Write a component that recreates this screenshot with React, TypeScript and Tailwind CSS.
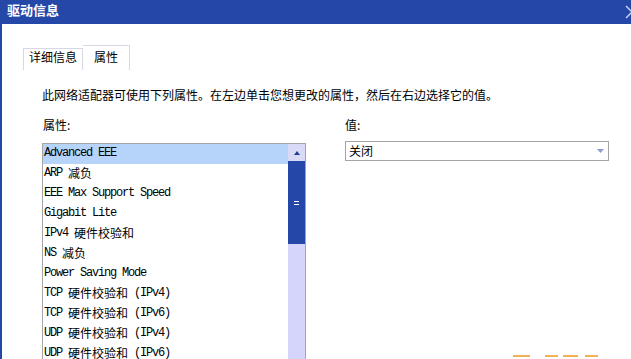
import React from 'react';

const props = [
  'Advanced EEE',
  'ARP 减负',
  'EEE Max Support Speed',
  'Gigabit Lite',
  'IPv4 硬件校验和',
  'NS 减负',
  'Power Saving Mode',
  'TCP 硬件校验和 (IPv4)',
  'TCP 硬件校验和 (IPv6)',
  'UDP 硬件校验和 (IPv4)',
  'UDP 硬件校验和 (IPv6)',
];

const cjk = /([\u3000-\u9fff\uff00-\uffef]+)/;

function MixedText({ text }: { text: string }) {
  // Latin glyphs squeezed to 6px cells, CJK kept at full 12px
  return (
    <>
      {text.split(cjk).map((part, i) =>
        cjk.test(part) ? (
          <span key={i} className="tracking-normal font-[family-name:'Noto_Sans_CJK_SC',sans-serif]">
            {part}
          </span>
        ) : (
          <span key={i} className="tracking-[-1.2px] whitespace-pre">
            {part}
          </span>
        )
      )}
    </>
  );
}

export default function App() {
  return (
    <div className="w-[631px] h-[359px] overflow-hidden bg-white flex flex-col font-[family-name:'Noto_Sans_CJK_SC',sans-serif] text-[12px] text-black">
      {/* Title bar */}
      <div className="h-[24px] shrink-0 bg-[#2548a8] flex items-center pl-[7px] pb-[4px]">
        <span className="text-white font-bold text-[13px] leading-[16px]">驱动信息</span>
        <svg className="ml-auto -mr-[9px] mt-[4px]" width="16" height="16" viewBox="0 0 16 16">
          <path d="M2 2 L8 8 L2 14" stroke="#c9d2f2" strokeWidth="1.5" fill="none" />
          <path d="M14 2 L8 8 L14 14" stroke="#c9d2f2" strokeWidth="1.5" fill="none" />
        </svg>
      </div>

      {/* Body */}
      <div className="flex-1 border-l-2 border-[#2548a8] flex flex-col">
        {/* Tabs */}
        <div className="pl-[21px] mt-[21px] flex items-end">
          <div className="h-[22px] px-[5px] border border-b-0 border-[#d6d8e6] leading-[16px] bg-white">
            详细信息
          </div>
          <div className="h-[25px] pt-[3px] px-[11px] border border-b-0 border-l-0 border-[#d6d8e6] leading-[16px] bg-white">
            属性
          </div>
        </div>

        <div className="pl-[40px] flex flex-col">
          <p className="mt-[17px] leading-[16px]">
            此网络适配器可使用下列属性。在左边单击您想更改的属性，然后在右边选择它的值。
          </p>

          <div className="mt-[14px] flex gap-[39px]">
            {/* Left column: property list */}
            <div className="w-[264px] flex flex-col">
              <div className="leading-[16px] pl-[1px]">属性:</div>
              <div className="mt-[10px] border border-[#a5a5a5] flex">
                <ul className="flex-1 flex flex-col">
                  {props.map((p, i) => (
                    <li
                      key={p}
                      className={`h-[20px] pl-[1px] flex items-center leading-[14px] pb-[3px] font-[family-name:'Liberation_Mono',monospace] text-[12px] ${
                        i === 0 ? 'bg-[#b6d3fa]' : ''
                      }`}
                    >
                      <MixedText text={p} />
                    </li>
                  ))}
                </ul>
                {/* Scrollbar */}
                <div className="w-[17px] flex flex-col bg-[#d5d5fc]">
                  <div className="h-[17px] bg-[#d8daf6] flex items-center justify-center">
                    <svg width="6" height="4" viewBox="0 0 6 4">
                      <path d="M0 4 L3 0 L6 4 Z" fill="#1f3f94" />
                    </svg>
                  </div>
                  <div className="h-[83px] bg-[#2547a8] flex flex-col items-center justify-center gap-[2px]">
                    <div className="w-[5px] h-[1px] bg-white" />
                    <div className="w-[5px] h-[1px] bg-white" />
                  </div>
                </div>
              </div>
            </div>

            {/* Right column: value */}
            <div className="w-[264px] flex flex-col">
              <div className="leading-[16px]">值:</div>
              <div className="mt-[8px] h-[20px] border border-[#a5a5a5] flex items-center pl-[3px] pr-[4px]">
                <span className="leading-[16px]">关闭</span>
                <svg className="ml-auto" width="7" height="4" viewBox="0 0 7 4">
                  <path d="M0 0 L7 0 L3.5 4 Z" fill="#8a9bd8" />
                </svg>
              </div>
              <div className="mt-[194px] ml-[168px] flex">
                <div className="w-[17px] h-[2px] bg-[#f3b055]" />
                <div className="ml-[15px] w-[13px] h-[2px] bg-[#f3b055]" />
                <div className="ml-[5px] w-[15px] h-[2px] bg-[#f3b055]" />
                <div className="ml-[7px] w-[13px] h-[2px] bg-[#f3b055]" />
              </div>
            </div>
          </div>
        </div>
      </div>
    </div>
  );
}
